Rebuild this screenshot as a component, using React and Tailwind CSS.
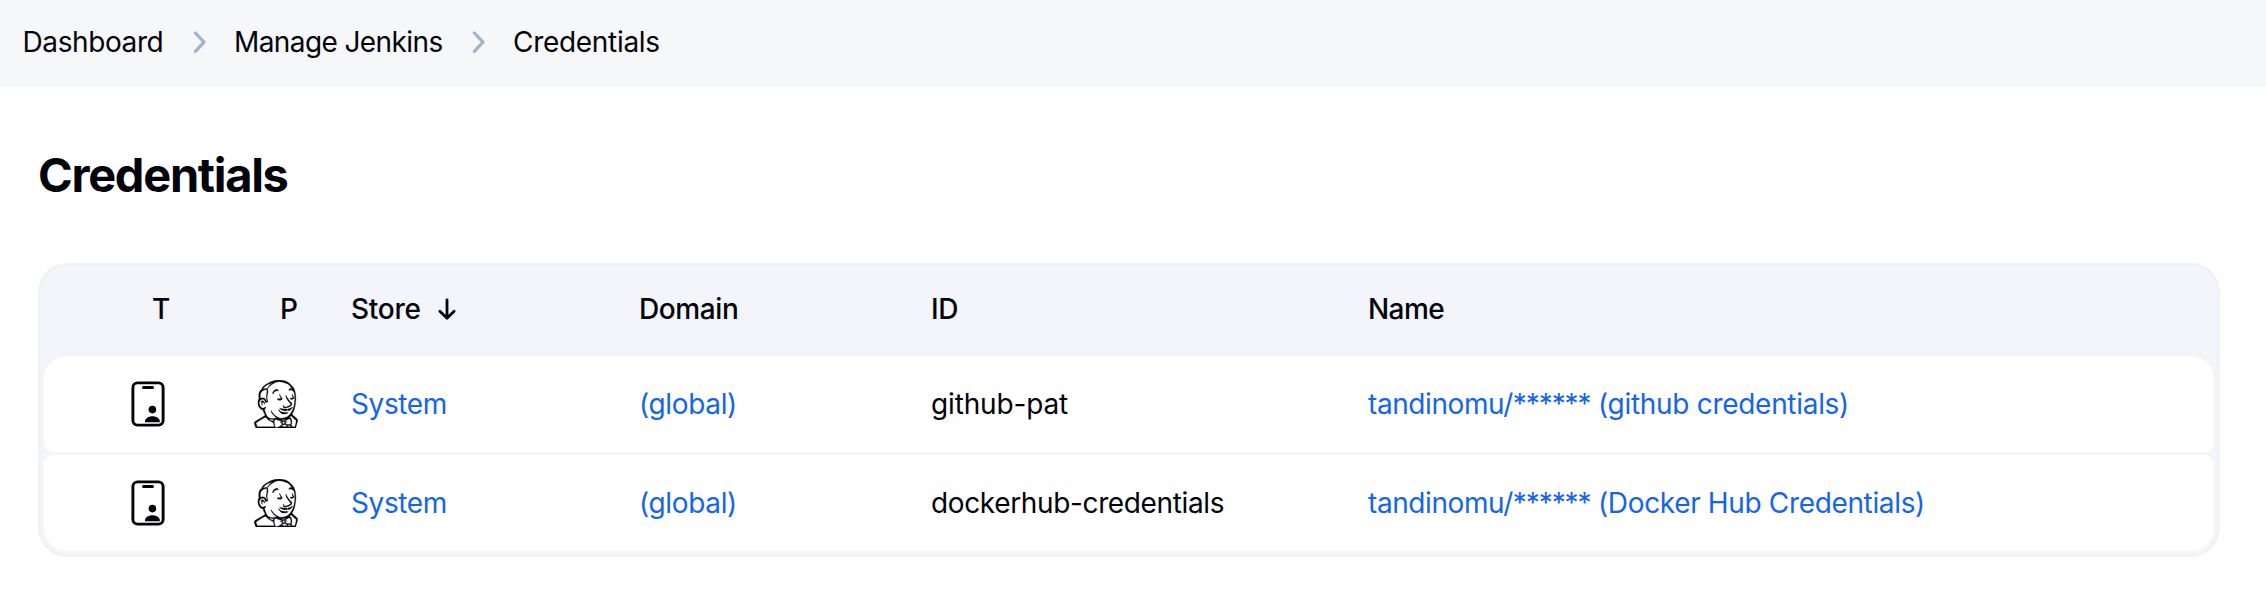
import React from "react";
import { SiJenkins } from "react-icons/si";

const COLS = "grid grid-cols-[208px_99px_288px_292px_437px_1fr] items-center";

const ROWS = [
  { id: "github-pat", idClass: "tracking-[-0.15px]", label: "(github credentials)", labelClass: "tracking-[-0.3px]", shape: "rounded-t-[23px] rounded-b-[9px]" },
  { id: "dockerhub-credentials", idClass: "tracking-[-0.36px]", label: "(Docker Hub Credentials)", labelClass: "tracking-[-0.35px]", shape: "rounded-t-[9px] rounded-b-[23px]" },
];

function Chevron() {
  return (
    <svg className="h-6 w-4 shrink-0" viewBox="0 0 16 24" fill="none" stroke="#9fb2cf" strokeWidth="3.2" strokeLinecap="round" strokeLinejoin="round">
      <path d="M3.4 3 12 12.2 3.4 21.4" />
    </svg>
  );
}

function SortArrow() {
  return (
    <svg className="h-6 w-5" viewBox="0 0 20 24" fill="none" stroke="currentColor" strokeWidth="2.8" strokeLinecap="round" strokeLinejoin="round">
      <path d="M10 2.8V21M2.9 14.2 10 21.2l7.1-7" />
    </svg>
  );
}

function IdCard() {
  return (
    <svg className="h-[46px] w-[34px]" viewBox="0 0 34 46">
      <rect x="1.9" y="1.9" width="30.2" height="42.2" rx="4.6" fill="none" stroke="currentColor" strokeWidth="2.9" />
      <rect x="11" y="5" width="12" height="3" rx="1.5" fill="currentColor" />
      <circle cx="21.4" cy="28.6" r="3.8" fill="currentColor" />
      <path d="M14 41.2v-1.1c0-2.6 3.4-4.9 7.4-4.9s7.4 2.3 7.4 4.9v1.1z" fill="currentColor" />
    </svg>
  );
}

export default function App() {
  return (
    <div className="min-h-[614px] bg-white font-[Inter,sans-serif] text-[28px] leading-9 font-[430] whitespace-nowrap text-[#03030b]">
      <nav className="flex h-[87px] items-center bg-[#f6f7f9] pb-[3px] pl-[22.5px]">
        <a className="w-[169px] tracking-[-0.4px]">Dashboard</a>
        <Chevron />
        <a className="ml-[26.5px] w-[236.5px] tracking-[-0.6px]">Manage Jenkins</a>
        <Chevron />
        <a className="ml-[26.5px] tracking-[-0.3px]">Credentials</a>
      </nav>
      <main className="pt-15 pr-[46px] pl-[38px]">
        <h1 className="text-[47px] leading-14 font-bold tracking-[-1.3px]">Credentials</h1>
        <div className="mt-15 rounded-[29px] border-3 border-[#f1f2f7] bg-[#f4f5fa] px-[3px] pb-[3px]">
          <div className={`${COLS} h-[90px] pb-1 font-[460]`}>
            <span className="pl-[108px]">T</span>
            <span className="pl-7">P</span>
            <span className="flex items-center gap-4 tracking-[-0.25px]">
              Store
              <SortArrow />
            </span>
            <span className="tracking-[-0.4px]">Domain</span>
            <span className="tracking-[-0.3px]">ID</span>
            <span className="tracking-[-0.6px]">Name</span>
          </div>
          <div className="flex flex-col gap-[3px]">
            {ROWS.map((r) => (
              <div key={r.id} className={`${COLS} ${r.shape} h-24 bg-white`}>
                <span className="pl-[87px]"><IdCard /></span>
                <SiJenkins className="size-12" strokeWidth="0.15" />
                <a className="tracking-[-0.4px] text-[#1464ee]">System</a>
                <a className="tracking-[-0.35px] text-[#1464ee]">(global)</a>
                <span className={r.idClass}>{r.id}</span>
                <a className={`text-[#1464ee] ${r.labelClass}`}>
                  <span className="tracking-[-0.42px]">tandinomu/</span>
                  <span className="tracking-[-1.1px]">******</span> {r.label}
                </a>
              </div>
            ))}
          </div>
        </div>
      </main>
    </div>
  );
}
